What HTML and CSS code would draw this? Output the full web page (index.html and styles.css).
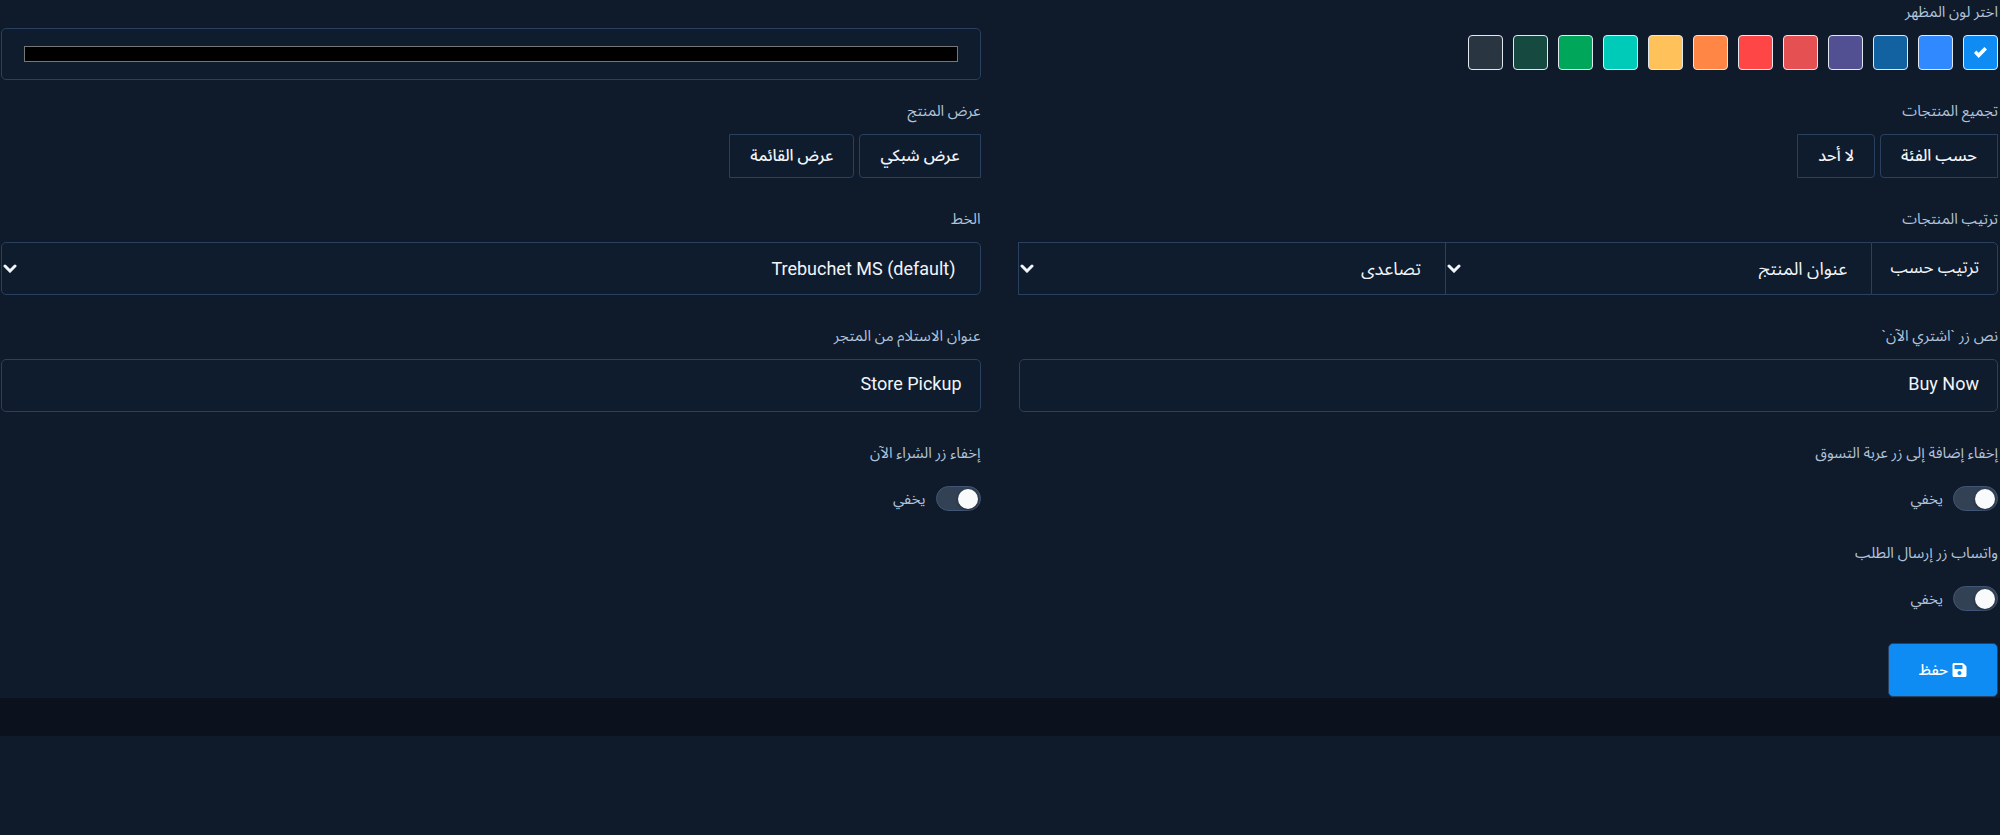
FILE: index.html
```
<!DOCTYPE html>
<html lang="ar" dir="rtl">
<head>
  <meta charset="UTF-8" />
  <meta name="viewport" content="width=device-width, initial-scale=1" />
  <title>إعدادات المظهر</title>
  <link rel="stylesheet" href="styles.css">
</head>
<body>
  <main>
    <form id="formTheme">
      <div class="campo">
        <span class="titulo">اختر لون المظهر</span>
        <div class="colors">
          <input type="radio" name="color" class="c1" aria-label="#0f8cf3" checked />
          <input type="radio" name="color" class="c2" aria-label="#3089ff" />
          <input type="radio" name="color" class="c3" aria-label="#1261a0" />
          <input type="radio" name="color" class="c4" aria-label="#534f93" />
          <input type="radio" name="color" class="c5" aria-label="#e55053" />
          <input type="radio" name="color" class="c6" aria-label="#ff4646" />
          <input type="radio" name="color" class="c7" aria-label="#ff8644" />
          <input type="radio" name="color" class="c8" aria-label="#ffc159" />
          <input type="radio" name="color" class="c9" aria-label="#00cbb8" />
          <input type="radio" name="color" class="c10" aria-label="#00a65a" />
          <input type="radio" name="color" class="c11" aria-label="#164a41" />
          <input type="radio" name="color" class="c12" aria-label="#293642" />
        </div>
      </div>
      <div class="campo custom">
        <input type="color" class="control" value="#000000" aria-label="لون مخصص" />
      </div>

      <div class="campo">
        <span class="titulo">تجميع المنتجات</span>
        <div class="botones">
          <button type="button">حسب الفئة</button>
          <button type="button">لا أحد</button>
        </div>
      </div>
      <div class="campo">
        <span class="titulo">عرض المنتج</span>
        <div class="botones">
          <button type="button">عرض شبكي</button>
          <button type="button">عرض القائمة</button>
        </div>
      </div>

      <div class="campo">
        <label class="titulo" for="sortBy">ترتيب المنتجات</label>
        <div class="grupo">
          <span class="prefijo">ترتيب حسب</span>
          <div class="select">
            <select id="sortBy" class="control"><option>عنوان المنتج</option></select>
            <svg viewBox="0 0 14 9"><path d="M2 2l5 5 5-5" /></svg>
          </div>
          <div class="select">
            <select class="control" aria-label="اتجاه الترتيب"><option>تصاعدی</option></select>
            <svg viewBox="0 0 14 9"><path d="M2 2l5 5 5-5" /></svg>
          </div>
        </div>
      </div>
      <div class="campo">
        <label class="titulo" for="font">الخط</label>
        <div class="select">
          <select id="font" class="control"><option dir="ltr">Trebuchet MS (default)</option></select>
          <svg viewBox="0 0 14 9"><path d="M2 2l5 5 5-5" /></svg>
        </div>
      </div>

      <div class="campo">
        <label class="titulo" for="buyNow">نص زر `اشتري الآن`</label>
        <input type="text" id="buyNow" class="control" value="Buy Now" />
      </div>
      <div class="campo">
        <label class="titulo" for="pickup">عنوان الاستلام من المتجر</label>
        <input type="text" id="pickup" class="control" value="Store Pickup" />
      </div>

      <div class="campo">
        <span class="titulo">إخفاء إضافة إلى زر عربة التسوق</span>
        <label class="switch"><input type="checkbox" /> يخفي</label>
      </div>
      <div class="campo">
        <span class="titulo">إخفاء زر الشراء الآن</span>
        <label class="switch"><input type="checkbox" /> يخفي</label>
      </div>

      <div class="campo">
        <span class="titulo">واتساب زر إرسال الطلب</span>
        <label class="switch"><input type="checkbox" /> يخفي</label>
      </div>

      <button type="submit" class="guardar">
        <svg viewBox="0 0 448 512"><path d="M434 130l-84-84A48 48 0 0 0 316 32H48C21 32 0 53 0 80v352c0 27 21 48 48 48h352c27 0 48-21 48-48V164a48 48 0 0 0-14-34zM224 416c-35 0-64-29-64-64s29-64 64-64 64 29 64 64-29 64-64 64zm96-304V212c0 7-5 12-12 12H76c-7 0-12-5-12-12V108c0-7 5-12 12-12h228c3 0 6 1 9 4l3 3A12 12 0 0 1 320 112z" /></svg>
        حفظ
      </button>
    </form>
  </main>
  <footer></footer>
</body>
</html>
```
FILE: styles.css
```
* {
  box-sizing: border-box;
}
body {
  font-family: Roboto, 'Noto Sans Arabic', 'DejaVu Sans', sans-serif;
  font-size: 15px;
  line-height: 20px;
  background-color: #0f1a2b;
  color: #b0c3da;
  margin: 0;
}
form {
  display: grid;
  grid-template-columns: 1fr 1fr;
  column-gap: 38px;
  padding: 2px 2px 1px 1px;
}
.campo {
  margin-bottom: 31px;
}
.titulo {
  display: block;
  margin-bottom: 13px;
}
.control {
  display: block;
  width: 100%;
  height: 53px;
  padding: 12px 18px;
  border: 1px solid #29405f;
  border-radius: 5px;
  background-color: #0f1c2e;
  color: #f1f5f9;
  font-family: inherit;
  font-size: 18px;
}
input[type="text"] {
  padding-bottom: 16px;
}
.custom {
  padding-top: 26px;
  margin-bottom: 0;
}
input[type="color"] {
  height: 52px;
  padding: 13px 20px;
}
.colors {
  display: flex;
  gap: 10px;
}
.colors input {
  appearance: none;
  width: 35px;
  height: 35px;
  margin: 0;
  border: 1px solid #e2e8f0;
  border-radius: 4px;
}
.colors input:checked {
  display: grid;
  place-items: center;
}
.colors input:checked::before {
  content: '';
  width: 13px;
  height: 11px;
  background: #fff;
  clip-path: polygon(0 55%, 18% 32%, 36% 52%, 80% 0, 100% 22%, 36% 100%);
}
.c1 { background: #0f8cf3; }
.c2 { background: #3089ff; }
.c3 { background: #1261a0; }
.c4 { background: #534f93; }
.c5 { background: #e55053; }
.c6 { background: #ff4646; }
.c7 { background: #ff8644; }
.c8 { background: #ffc159; }
.c9 { background: #00cbb8; }
.c10 { background: #00a65a; }
.c11 { background: #164a41; }
.c12 { background: #293642; }
.botones {
  display: flex;
  gap: 5px;
}
.botones button {
  height: 44px;
  padding: 0 20px;
  border: 1px solid #29405f;
  background: #0f1c2e;
  color: #f1f5f9;
  font-family: inherit;
  font-size: 16px;
  font-weight: 500;
}
.botones button:first-child {
  border-radius: 4px 0 0 4px;
}
.botones button:last-child {
  border-radius: 0 4px 4px 0;
}
.prefijo {
  padding: 14px 18px;
  border: 1px solid #29405f;
  border-radius: 0 5px 5px 0;
  background: #0f1c2e;
  color: #f1f5f9;
  font-size: 17px;
}
.select {
  position: relative;
}
.select select {
  appearance: none;
  padding-right: 24px;
  text-align: right;
}
.select svg {
  position: absolute;
  left: 2px;
  top: 22px;
  width: 14px;
  height: 9px;
  fill: none;
  stroke: #f1f5f9;
  stroke-width: 3;
  stroke-linecap: round;
}
.grupo {
  display: flex;
}
.grupo .select {
  flex: 1;
}
.grupo .control {
  border-right: 0;
  border-radius: 0;
}
.switch {
  display: flex;
  align-items: center;
  gap: 10px;
  padding: 10px 0 1px;
}
.switch input {
  appearance: none;
  width: 45px;
  height: 25px;
  margin: 0;
  padding: 2px;
  border: 1px solid #415576;
  border-radius: 13px;
  background: #334155;
}
.switch input::before {
  content: '';
  display: block;
  width: 20px;
  height: 20px;
  border-radius: 50%;
  background: #f8fafc;
  box-shadow: 0 1px 3px rgba(0,0,0,0.4);
}
.switch input:checked::before {
  margin-right: 20px;
}
.guardar {
  grid-column: 1;
  justify-self: start;
  display: flex;
  align-items: center;
  gap: 4px;
  height: 54px;
  padding: 0 30px;
  border: 1px solid #29405f;
  border-radius: 5px;
  background: #0f8cf3;
  color: #fff;
  font-family: inherit;
  font-size: 15px;
  font-weight: 500;
}
.guardar svg {
  width: 15px;
  height: 16px;
  fill: #fff;
}
footer {
  height: 38px;
  background: #0b121e;
}
```
